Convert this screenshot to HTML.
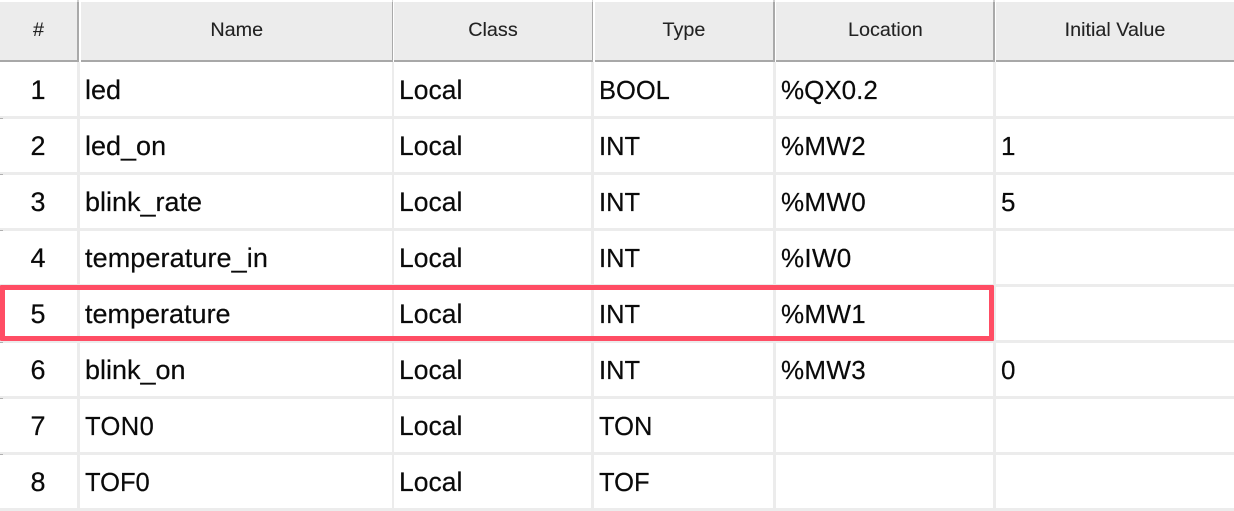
<!DOCTYPE html>
<html><head><meta charset="utf-8">
<style>
html,body{margin:0;padding:0;background:#fff}
body{width:1234px;height:510px;position:relative;overflow:hidden;font-family:"Liberation Sans",Arial,sans-serif}
.a{position:absolute}
.h{position:absolute;top:2px;height:58px;line-height:57px;background:#ececec;color:#222;font-size:19.8px;text-align:center;-webkit-text-stroke:.1px #222}
.t{position:absolute;font-size:26px;line-height:30px;color:#0a0a0a;white-space:nowrap;-webkit-text-stroke:.2px #0a0a0a}
.n{font-size:27px}
.l{font-size:26.5px;left:399px}
.c{font-size:25.5px;margin-top:1px}
.d{font-size:27px;left:30.5px}
.m{left:781px;letter-spacing:.3px}
.y{left:599px}
.vh{position:absolute;top:2px;height:60px;background:#a9a9a9;width:1.8px}
.tk{position:absolute;top:0;height:2px;background:#d0d0d0;width:1.8px}
.v{position:absolute;top:62px;height:448px;background:#ececec;width:2.8px}
.r{position:absolute;left:0;width:1234px;height:3px;background:#ececec}
.hl{position:absolute;top:60px;height:2px;background:#a8a8a8}
.g{position:absolute;left:0;width:3px;height:1px;background:#b0b0b0}
</style></head><body>
<div class="h" style="left:0;width:77px">#</div>
<div class="h" style="left:80.5px;width:311px;text-indent:1.5px">Name</div>
<div class="h" style="left:394.3px;width:197.4px">Class</div>
<div class="h" style="left:594.5px;width:178.8px">Type</div>
<div class="h" style="left:776px;width:217.3px;text-indent:1.5px">Location</div>
<div class="h" style="left:996px;width:238px">Initial Value</div>

<div class="hl" style="left:0;width:79px"></div>
<div class="hl" style="left:80.5px;width:312.5px"></div>
<div class="hl" style="left:394.3px;width:199px"></div>
<div class="hl" style="left:594.5px;width:180.5px"></div>
<div class="hl" style="left:776px;width:219px"></div>
<div class="hl" style="left:996px;width:238px"></div>

<div class="vh" style="left:77.2px"></div><div class="tk" style="left:77.2px"></div>
<div class="vh" style="left:391.5px"></div><div class="tk" style="left:391.5px"></div>
<div class="vh" style="left:591.7px"></div><div class="tk" style="left:591.7px"></div>
<div class="vh" style="left:773.3px"></div><div class="tk" style="left:773.3px"></div>
<div class="vh" style="left:993.3px"></div><div class="tk" style="left:993.3px"></div>

<div class="v" style="left:77px"></div>
<div class="v" style="left:391.5px"></div>
<div class="v" style="left:591.3px"></div>
<div class="v" style="left:773px"></div>
<div class="v" style="left:993.3px"></div>

<div class="r" style="top:116px"></div>
<div class="r" style="top:172px"></div>
<div class="r" style="top:228px"></div>
<div class="r" style="top:284px"></div>
<div class="r" style="top:340px"></div>
<div class="r" style="top:396px"></div>
<div class="r" style="top:452px"></div>
<div class="r" style="top:508px"></div>

<div class="g" style="top:118px"></div>
<div class="g" style="top:174px"></div>
<div class="g" style="top:230px"></div>
<div class="g" style="top:342px"></div>
<div class="g" style="top:398px"></div>
<div class="g" style="top:454px"></div>

<div class="t d" style="top:75px">1</div><div class="t n" style="left:85px;top:75px">led</div><div class="t l" style="top:75px">Local</div><div class="t c y" style="top:75px">BOOL</div><div class="t" style="left:781px;top:75px">%QX0.2</div>
<div class="t d" style="top:131px">2</div><div class="t n" style="left:85px;top:131px">led_on</div><div class="t l" style="top:131px">Local</div><div class="t c y" style="top:131px">INT</div><div class="t m" style="top:131px">%MW2</div><div class="t" style="left:1001px;top:131px">1</div>
<div class="t d" style="top:187px">3</div><div class="t n" style="left:85px;top:187px">blink_rate</div><div class="t l" style="top:187px">Local</div><div class="t c y" style="top:187px">INT</div><div class="t m" style="top:187px">%MW0</div><div class="t" style="left:1001px;top:187px">5</div>
<div class="t d" style="top:243px">4</div><div class="t n" style="left:85px;top:243px;letter-spacing:.1px">temperature_in</div><div class="t l" style="top:243px">Local</div><div class="t c y" style="top:243px">INT</div><div class="t m" style="top:243px">%IW0</div>
<div class="t d" style="top:299px">5</div><div class="t n" style="left:85px;top:299px">temperature</div><div class="t l" style="top:299px">Local</div><div class="t c y" style="top:299px">INT</div><div class="t m" style="top:299px">%MW1</div>
<div class="t d" style="top:355px">6</div><div class="t n" style="left:85px;top:355px">blink_on</div><div class="t l" style="top:355px">Local</div><div class="t c y" style="top:355px">INT</div><div class="t m" style="top:355px">%MW3</div><div class="t" style="left:1001px;top:355px">0</div>
<div class="t d" style="top:411px">7</div><div class="t c" style="left:85px;top:411px;letter-spacing:.4px">TON0</div><div class="t l" style="top:411px">Local</div><div class="t c y" style="top:411px">TON</div>
<div class="t d" style="top:467px">8</div><div class="t c" style="left:85px;top:467px">TOF0</div><div class="t l" style="top:467px">Local</div><div class="t c y" style="top:467px">TOF</div>

<div class="a" style="left:0;top:285px;width:984px;height:46px;border:5px solid #ff4d64;border-radius:1px"></div>
</body></html>
